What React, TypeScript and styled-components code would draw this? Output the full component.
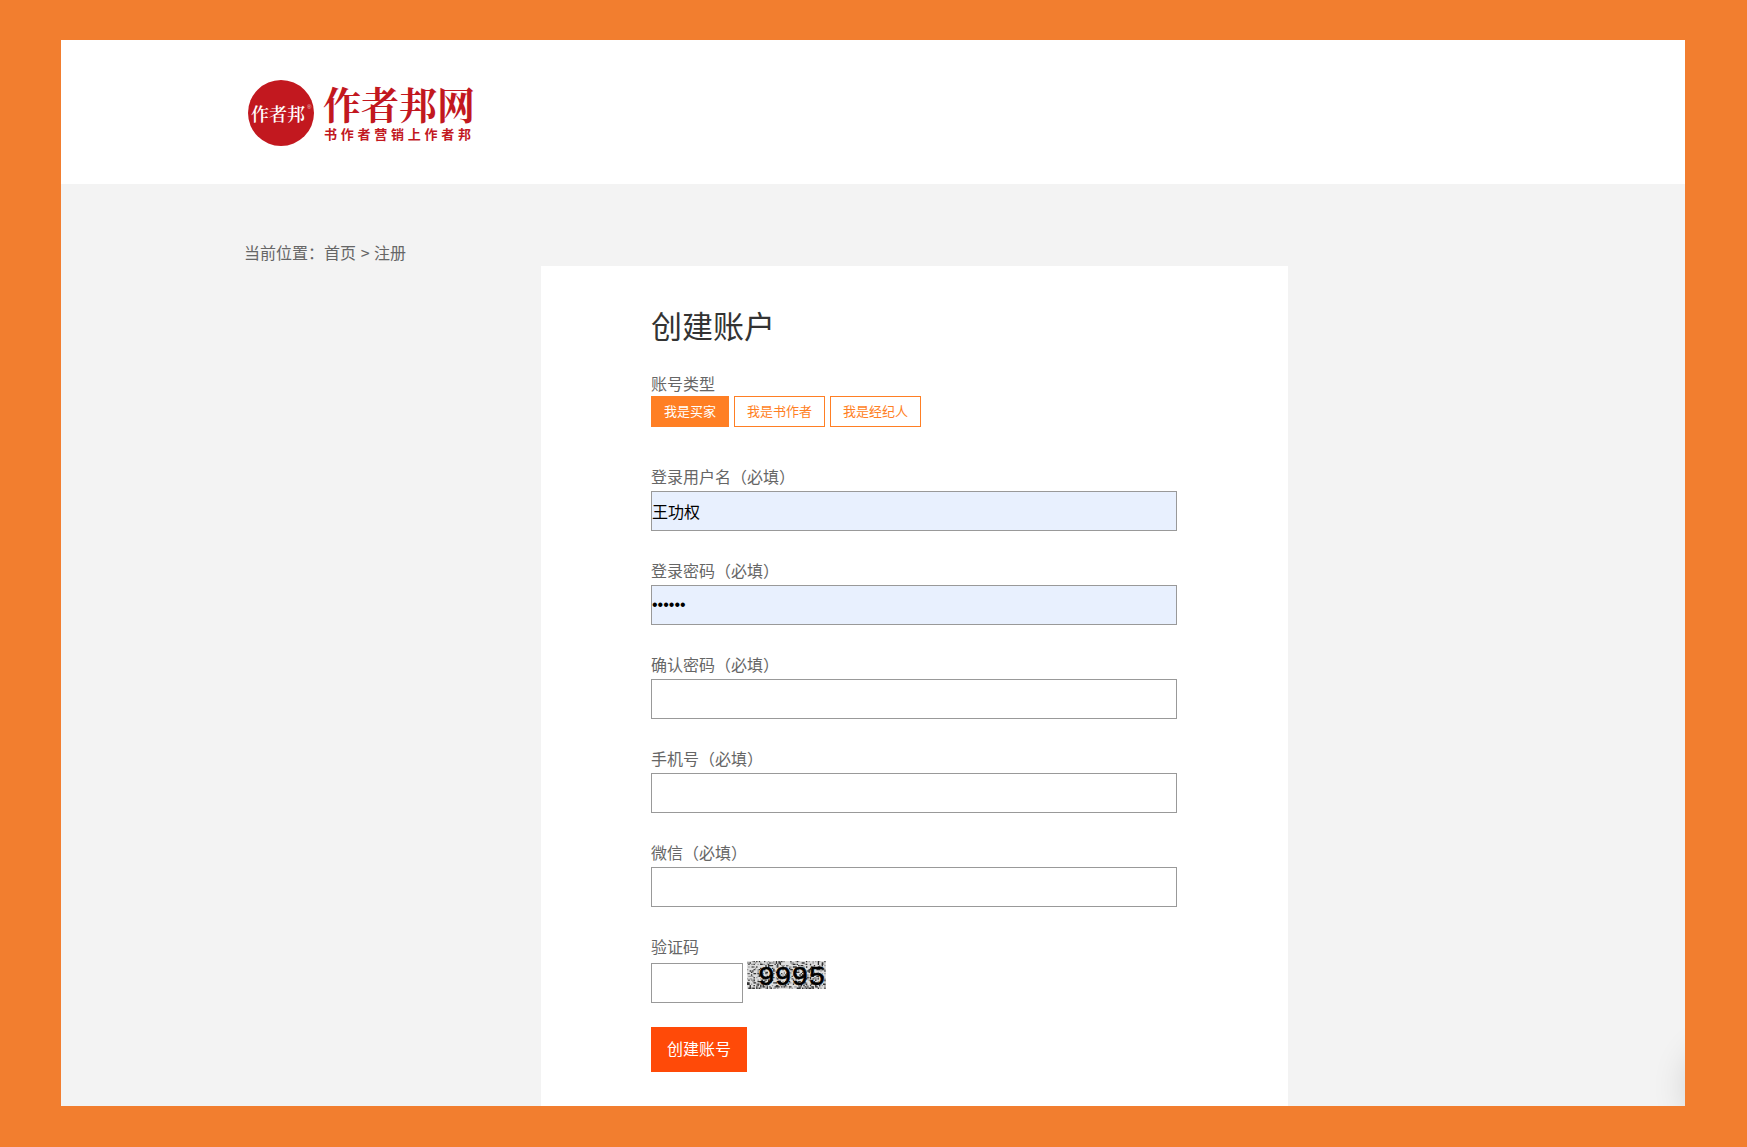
import React, { useState } from "react";
import styled, { createGlobalStyle } from "styled-components";

const GlobalStyle = createGlobalStyle`
  *, *::before, *::after { box-sizing: border-box; }
  body {
    margin: 0;
    background: #f27e2f;
    color: #666;
    font-family: "Noto Sans CJK SC", "Noto Sans", sans-serif;
    font-size: 16px;
  }
  button, input { font-family: inherit; font-size: inherit; }
`;

const Frame = styled.div`
  display: flex;
  min-height: 100vh;
  padding: 40px 62px 41px 61px;
`;

const Page = styled.div`
  position: relative;
  flex: 1;
  min-width: 0;
  display: flex;
  flex-direction: column;
  overflow: hidden;
  background: #f3f3f3;
`;

const Container = styled.div`
  width: 100%;
  max-width: 1258px;
  margin: 0 auto;
`;

const Header = styled.header`
  padding: 40px 0 38px;
  background: #fff;
`;

const Brand = styled.a`
  display: inline-flex;
  align-items: center;
  gap: 9px;
  padding-left: 4px;
  color: #c2181f;
  text-decoration: none;
  vertical-align: top;
`;

const Seal = styled.svg`
  display: block;
  width: 66px;
  height: 66px;
`;

const BrandText = styled.span`
  display: flex;
  flex-direction: column;
  gap: 4px;
  width: 150px;
`;

const BrandName = styled.span`
  font-family: "Noto Serif CJK SC", "Noto Sans CJK SC", serif;
  font-size: 38px;
  font-weight: 700;
  line-height: 38px;
  white-space: nowrap;
`;

const Slogan = styled.span`
  padding: 0 2px 0 1px;
  font-size: 13px;
  font-weight: 700;
  line-height: 16px;
  text-align-last: justify;
`;

const Main = styled(Container).attrs({ as: "main" })`
  flex: 1;
  display: flex;
  flex-direction: column;
  padding-top: 57px;
`;

const Breadcrumb = styled.nav`
  padding-bottom: 2px;
  line-height: 23px;
`;

const Crumb = styled.a`
  color: inherit;
  text-decoration: none;
`;

const Separator = styled.span`
  margin: 0 1px;
`;

const Card = styled.form`
  flex: 1;
  width: 100%;
  max-width: 747px;
  margin-left: 297px;
  padding: 41px 111px 34px 110px;
  background: #fff;
`;

const Title = styled.h1`
  margin: 0 0 27px;
  color: #333;
  font-size: 31px;
  font-weight: 400;
  line-height: 36px;
`;

const Fields = styled.div`
  display: flex;
  flex-direction: column;
  gap: 28px;
  margin-top: 38px;
`;

const Field = styled.div`
  display: flex;
  flex-direction: column;
`;

const Label = styled.label`
  padding-bottom: 3px;
  line-height: 23px;
`;

const GroupLabel = styled.div`
  line-height: 26px;
`;

const TypeRow = styled.div`
  display: flex;
  gap: 5px;
`;

const TypeButton = styled.button<{ $active: boolean }>`
  height: 31px;
  padding: 0 12px 2px;
  border: 1px solid #ff7f24;
  background: ${(p) => (p.$active ? "#ff7f24" : "#fff")};
  color: ${(p) => (p.$active ? "#fff" : "#ff7f24")};
  font-size: 13px;
  line-height: 27px;
  cursor: pointer;
`;

const TextInput = styled.input<{ $filled?: boolean; $short?: boolean }>`
  width: ${(p) => (p.$short ? "92px" : "100%")};
  height: 40px;
  padding: 0;
  border: 1px solid #999;
  border-radius: 0;
  outline: none;
  background: ${(p) => (p.$filled ? "#e8f0fe" : "#fff")};
  color: #000;

  &[type="password"] {
    font-family: "Liberation Sans", sans-serif;
  }
`;

const CaptchaRow = styled.div`
  display: flex;
  align-items: flex-start;
  gap: 4px;

  ${TextInput} {
    margin-top: 2px;
  }
`;

const CaptchaImage = styled.svg`
  display: block;
  width: 79px;
  height: 28px;
  overflow: visible;
`;

const Submit = styled.button`
  height: 45px;
  margin-top: 24px;
  padding: 0 16px 2px;
  border: 0;
  background: #ff4a08;
  color: #fff;
  line-height: 43px;
  cursor: pointer;
`;

const FloatingShadow = styled.div`
  position: absolute;
  right: -82px;
  bottom: -20px;
  width: 80px;
  height: 80px;
  border-radius: 50%;
  box-shadow: 0 0 36px rgba(0, 0, 0, 0.16);
`;

function speckles(cols: number, rows: number, seed: number, share: number) {
  let state = seed;
  let d = "";
  for (let y = 0; y < rows; y++) {
    for (let x = 0; x < cols; x++) {
      state = (Math.imul(state, 1664525) + 1013904223) >>> 0;
      if (state / 4294967296 < share) d += `M${x} ${y}h1v1h-1z`;
    }
  }
  return d;
}

const DARK = speckles(60, 21, 77, 0.22);
const GREY = speckles(60, 21, 4051, 0.24);

function Captcha() {
  return (
    <CaptchaImage viewBox="0 0 79 28" role="img" aria-label="验证码图片">
      <rect width="79" height="28" fill="#dedede" />
      <g transform="scale(1.31 1.33)">
        <path d={GREY} fill="#999" />
        <path d={DARK} fill="#333" />
      </g>
      <text
        x="11"
        y="24"
        fontFamily="Liberation Mono, monospace"
        fontSize="28"
        fill="#000"
        stroke="#000"
        strokeWidth="0.6"
      >
        9995
      </text>
    </CaptchaImage>
  );
}

const ACCOUNT_TYPES = ["我是买家", "我是书作者", "我是经纪人"];

const FIELDS = [
  { id: "username", label: "登录用户名（必填）", type: "text", value: "王功权" },
  { id: "password", label: "登录密码（必填）", type: "password", value: "123456" },
  { id: "confirm", label: "确认密码（必填）", type: "password", value: "" },
  { id: "phone", label: "手机号（必填）", type: "tel", value: "" },
  { id: "wechat", label: "微信（必填）", type: "text", value: "" },
];

export default function App() {
  const [accountType, setAccountType] = useState(ACCOUNT_TYPES[0]);

  return (
    <Frame>
      <GlobalStyle />
      <Page>
        <Header>
          <Container>
            <Brand href="#">
              <Seal viewBox="0 0 66 66">
                <circle cx="33" cy="33" r="33" fill="#c2181f" />
                <text
                  x="3"
                  y="41"
                  fill="#fff"
                  fontSize="18"
                  fontWeight="600"
                  fontFamily="Noto Serif CJK SC, Noto Sans CJK SC, serif"
                >
                  作者邦
                </text>
                <text x="59" y="29" fill="#fff" opacity="0.7" fontSize="6" fontFamily="Liberation Sans, sans-serif">
                  ®
                </text>
              </Seal>
              <BrandText>
                <BrandName>作者邦网</BrandName>
                <Slogan>书作者营销上作者邦</Slogan>
              </BrandText>
            </Brand>
          </Container>
        </Header>

        <Main>
          <Breadcrumb>
            当前位置：<Crumb href="#">首页</Crumb> <Separator>&gt;</Separator> <Crumb href="#">注册</Crumb>
          </Breadcrumb>

          <Card onSubmit={(e: React.FormEvent) => e.preventDefault()}>
            <Title>创建账户</Title>

            <GroupLabel id="account-type">账号类型</GroupLabel>
            <TypeRow role="group" aria-labelledby="account-type">
              {ACCOUNT_TYPES.map((name) => (
                <TypeButton
                  key={name}
                  type="button"
                  $active={name === accountType}
                  aria-pressed={name === accountType}
                  onClick={() => setAccountType(name)}
                >
                  {name}
                </TypeButton>
              ))}
            </TypeRow>

            <Fields>
              {FIELDS.map((f) => (
                <Field key={f.id}>
                  <Label htmlFor={f.id}>{f.label}</Label>
                  <TextInput id={f.id} type={f.type} defaultValue={f.value} $filled={f.value !== ""} />
                </Field>
              ))}
              <Field>
                <Label htmlFor="captcha">验证码</Label>
                <CaptchaRow>
                  <TextInput id="captcha" type="text" $short />
                  <Captcha />
                </CaptchaRow>
              </Field>
            </Fields>

            <Submit type="submit">创建账号</Submit>
          </Card>
        </Main>
        <FloatingShadow />
      </Page>
    </Frame>
  );
}
